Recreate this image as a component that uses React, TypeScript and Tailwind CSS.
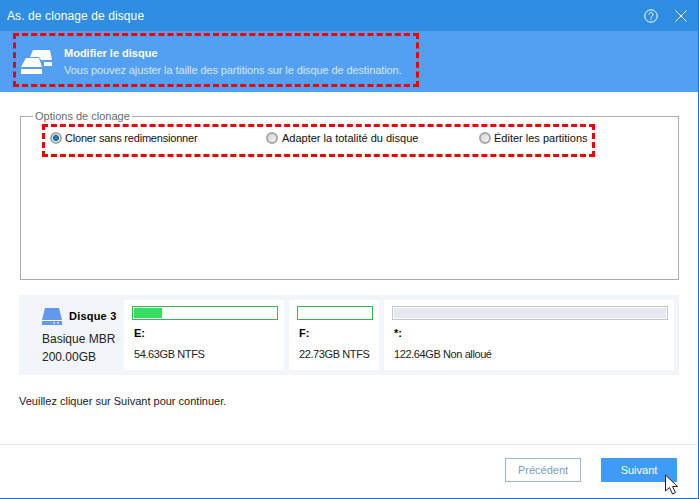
import React from 'react';

const font = "font-['Liberation_Sans',sans-serif]";

const DiskStackIcon = () => (
  <svg width="32" height="24" viewBox="0 0 32 24" fill="#fff">
    <path d="M12 0h17l2 10H20l-2-3H9z" />
    <path d="M23 12h8v4h-8z" />
    <path d="M5 8h13l3 9H0z" />
    <path d="M0 19h21v5H0z" />
  </svg>
);

const HddIcon = () => (
  <svg width="20" height="17" viewBox="0 0 20 17">
    <path d="M3 0h14l3 12H0z" fill="#6497ee" />
    <path d="M0 13h20v4H0z" fill="#6497ee" />
    <path d="M11 14.500h2v1h-2zM15 14.500h2v1h-2z" fill="#fff" />
  </svg>
);

const Radio = ({ checked }: { checked?: boolean }) => (
  <span className="relative flex h-[12px] w-[12px] shrink-0 items-center justify-center rounded-full border-2 border-[#a8a8a8] bg-gradient-to-br from-[#d4d4d4] to-[#f4f4f4]">
    {checked && <span className="h-[6px] w-[6px] rounded-full border border-[#0b4f80] bg-[#1a86c4]" />}
  </span>
);

interface PartitionProps {
  width: string;
  barClass: string;
  fill?: React.ReactNode;
  letter: string;
  info: string;
}

const Partition: React.FC<PartitionProps> = ({ width, barClass, fill, letter, info }) => (
  <div className={`${width} h-[70px] shrink-0 bg-white pt-[6px] pr-[6px] pl-[8px]`}>
    <div className={`h-[14px] border ${barClass}`}>{fill}</div>
    <div className="mt-[5px] pl-[2px] text-[11px] leading-[16px] font-bold text-black">{letter}</div>
    <div className="mt-[5px] pl-[2px] text-[11px] leading-[16px] tracking-[-0.4px] whitespace-nowrap text-[#222]">{info}</div>
  </div>
);

export default function App() {
  return (
    <div className={`${font} relative flex h-[499px] w-[699px] flex-col overflow-hidden border-r border-b border-[#1b75c4] bg-white`}>
      <header className="flex h-[31px] shrink-0 items-center justify-between bg-[#2f8de4] pr-[11px] pl-[7px]">
        <span className="text-[12px] tracking-[0.1px] text-white">As. de clonage de disque</span>
        <div className="flex items-center gap-[17px]">
          <svg width="14" height="14" viewBox="0 0 14 14" fill="none" stroke="#fff" strokeWidth="1">
            <circle cx="7" cy="7" r="6.2" />
            <path d="M5 5.500a2 2 0 1 1 3 1.700c-.7.400-1 .8-1 1.600" />
            <path d="M7 10v1" />
          </svg>
          <svg width="12" height="12" viewBox="0 0 12 12" fill="none" stroke="#fff" strokeWidth="1">
            <path d="M.5.5l11 11M11.500.5l-11 11" />
          </svg>
        </div>
      </header>

      <section className="flex h-[61px] shrink-0 items-center gap-[11px] bg-[#53a0f2] pl-[21px]">
        <DiskStackIcon />
        <div>
          <div className="text-[11px] leading-[15px] font-bold text-white">Modifier le disque</div>
          <div className="mt-[2px] text-[11px] leading-[15px] tracking-[-0.1px] text-[#d5e7fb]">
            Vous pouvez ajuster la taille des partitions sur le disque de destination.
          </div>
        </div>
      </section>

      <fieldset className="mx-[20px] mt-[17px] h-[171px] w-[659px] shrink-0 border border-[#ababab] pl-[12px]">
        <legend className="px-[2px] text-[11px] leading-[14px] text-[#6b6b6b]">Options de clonage</legend>
        <div className="mt-[7px] flex items-center pl-[17px] text-[11px] leading-[16px] text-[#111]">
          <label className="flex w-[216px] items-center gap-[3px] tracking-[-0.2px]">
            <Radio checked />
            Cloner sans redimensionner
          </label>
          <label className="flex w-[213px] items-center gap-[4px]">
            <Radio />
            Adapter la totalité du disque
          </label>
          <label className="flex items-center gap-[3px]">
            <Radio />
            Éditer les partitions
          </label>
        </div>
      </fieldset>

      <section className="mx-[19px] mt-[15px] flex h-[80px] w-[660px] shrink-0 items-center gap-[5px] bg-[#f2f5fa]">
        <div className="w-[100px] shrink-0 pt-[4px] pl-[23px] text-[12px] text-[#222]">
          <div className="flex items-center gap-[7px] leading-[17px]">
            <HddIcon />
            <span className="text-[11px] font-bold tracking-[0.2px] text-black">Disque 3</span>
          </div>
          <div className="mt-[5px] leading-[18px]">Basique MBR</div>
          <div className="leading-[18px]">200.00GB</div>
        </div>
        <Partition
          width="w-[160px]"
          barClass="border-[#35b85a]"
          fill={<div className="mt-[1px] ml-[1px] h-[10px] w-[28px] bg-[#38dc60]" />}
          letter="E:"
          info="54.63GB NTFS"
        />
        <Partition width="w-[90px]" barClass="border-[#35b85a]" letter="F:" info="22.73GB NTFS" />
        <Partition
          width="w-[290px]"
          barClass="border-[#c3c6cc]"
          fill={<div className="m-[1px] h-[10px] bg-[#e5e8f0]" />}
          letter="*:"
          info="122.64GB Non alloué"
        />
      </section>

      <p className="mt-[18px] ml-[19px] text-[11px] leading-[16px] text-[#222]">Veuillez cliquer sur Suivant pour continuer.</p>

      <footer className="mt-auto flex h-[54px] shrink-0 items-start justify-end gap-[20px] border-t border-[#e6ebf1] pt-[13px] pr-[21px]">
        <button className="h-[24px] w-[76px] border border-[#9db6dc] bg-white text-[11px] text-[#7a9cc9]">Précédent</button>
        <button className="h-[24px] w-[76px] bg-[#3f9bf5] text-[11px] text-white">Suivant</button>
      </footer>

      {/* red annotations and pointer sit over the dialog */}
      <div className="absolute top-[33px] left-[13px] h-[54px] w-[406px] border-[3px] border-dashed border-[#f00000]" />
      <div className="absolute top-[124px] left-[42px] h-[33px] w-[553px] border-[3px] border-dashed border-[#f00000]" />
      <svg className="absolute top-[474px] left-[664px]" width="14" height="22" viewBox="0 0 14 22">
        <path d="M1.500 1v16l4-3.500 3 6.500 3-1.500-3-6h5z" fill="#fff" stroke="#222" strokeWidth="1" />
      </svg>
    </div>
  );
}
